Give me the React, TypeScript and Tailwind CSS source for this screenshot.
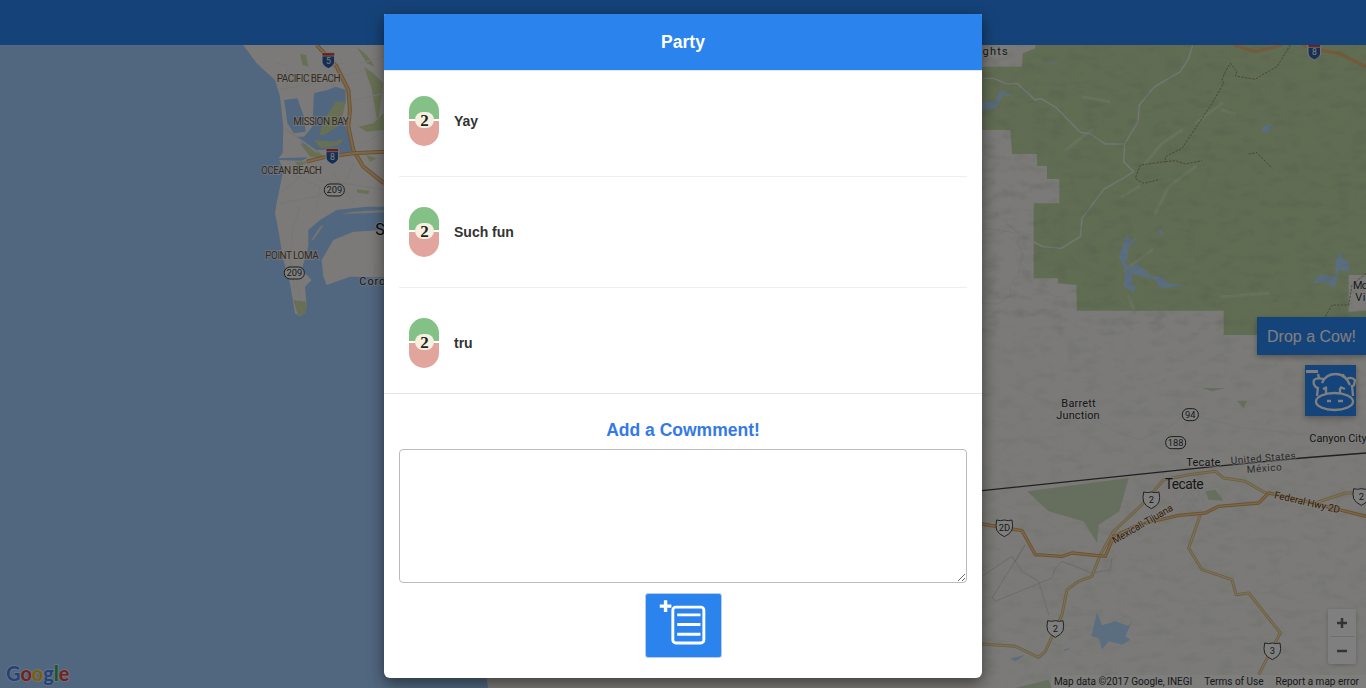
import React from "react";

type LabelProps = { x: number; y: number; w: number; s?: number; c?: string; r?: number; children: React.ReactNode };
const L = ({ x, y, w, s = 33, c = "#2f2f2f", r, children }: LabelProps) => (
  <text
    x={x}
    y={y}
    fontSize={s}
    textLength={w}
    lengthAdjust="spacing"
    fill={c}
    stroke="rgba(255,255,255,0.55)"
    strokeWidth={6}
    paintOrder="stroke"
    transform={r ? `rotate(${r} ${x} ${y})` : undefined}
  >
    {children}
  </text>
);

const Road = ({ d, w = 3.5, c = "#ececea" }: { d: string; w?: number; c?: string }) => (
  <path d={d} fill="none" stroke={c} strokeWidth={w} strokeLinejoin="round" strokeLinecap="round" />
);

const Hwy = ({ d, w = 9 }: { d: string; w?: number }) => (
  <g>
    <path d={d} fill="none" stroke="#d8a565" strokeWidth={w + 3} strokeLinejoin="round" />
    <path d={d} fill="none" stroke="#f8d295" strokeWidth={w - 3} strokeLinejoin="round" />
  </g>
);

const Yellow = ({ d }: { d: string }) => (
  <g>
    <path d={d} fill="none" stroke="#d6bd84" strokeWidth={9} strokeLinejoin="round" />
    <path d={d} fill="none" stroke="#f7e3ae" strokeWidth={4} strokeLinejoin="round" />
  </g>
);

const Interstate = ({ x, y, n }: { x: number; y: number; n: string }) => (
  <g transform={`translate(${x} ${y})`}>
    <path d="M-19 -22 H19 V2 C19 14 8 20 0 24 C-8 20 -19 14 -19 2 Z" fill="#2a5fa8" stroke="#fff" strokeWidth={3} />
    <path d="M-19 -24 H19 V-14 H-19 Z" fill="#c9413c" stroke="#fff" strokeWidth={2} />
    <text x={0} y={10} fontSize={26} fill="#fff" textAnchor="middle">{n}</text>
  </g>
);

const Oval = ({ x, y, n, w = 60 }: { x: number; y: number; n: string; w?: number }) => (
  <g>
    <rect x={x - w / 2} y={y - 18} width={w} height={36} rx={17} fill="#fff" stroke="#333" strokeWidth={3} />
    <text x={x} y={y + 10} fontSize={28} fill="#333" textAnchor="middle">{n}</text>
  </g>
);

const Shield = ({ x, y, n }: { x: number; y: number; n: string }) => (
  <g transform={`translate(${x} ${y})`}>
    <path d="M-23 -24 Q-12 -20 0 -24 Q12 -20 23 -24 Q27 -6 23 6 Q18 18 0 26 Q-18 18 -23 6 Q-27 -6 -23 -24 Z" fill="#fff" stroke="#444" strokeWidth={3} />
    <text x={0} y={10} fontSize={28} fill="#333" textAnchor="middle">{n}</text>
  </g>
);

const MapArt = () => (
  <svg className="absolute inset-0 w-full h-full" viewBox="0 45 1366 643" preserveAspectRatio="none">
    <defs>
      <filter id="terrain" x="0" y="0" width="100%" height="100%">
        <feTurbulence type="fractalNoise" baseFrequency="0.06 0.11" numOctaves={4} seed={11} />
        <feColorMatrix type="matrix" values="0 0 0 0 0.3  0 0 0 0 0.32  0 0 0 0 0.28  1.6 0 0 0 -0.72" />
      </filter>
    </defs>
    <rect x={0} y={45} width={1366} height={643} fill="#f6f5f0" />

    {/* coast side */}
    <g transform="translate(0 30) scale(0.33333)">
      <path
        d="M0 45 L730 45 770 100 825 150 840 200 850 290 848 370 835 385 850 420 840 470 830 520 825 550 835 600 850 690 870 760 885 850 900 860 920 830 915 770 935 750 905 720 925 650 925 600 960 570 1010 540 1100 530 1152 530 1152 600 1060 605 1000 630 965 690 970 740 980 765 1050 740 1152 742 1300 800 1464 1974 0 1974 Z"
        fill="#a3ccff"
      />
      <path d="M852 210 L892 205 912 260 917 305 882 310 862 280 857 240 Z M942 190 L982 180 1007 170 1037 180 1037 220 1020 240 1062 360 1030 380 982 360 922 360 892 320 912 320 937 290 Z M830 385 L925 382 905 392 835 390 Z" fill="#a3ccff" />
      <path d="M1007 215 L1037 215 1027 260 1012 290 972 315 957 315 977 260 Z M942 330 L1002 335 1032 325 1017 345 962 355 Z" fill="#cfe0a8" />
      <path d="M900 72 L918 75 925 110 908 105 Z M1070 50 L1100 75 1125 110 1100 100 Z M1092 110 L1120 130 1150 160 1137 260 1090 295 1130 265 1115 175 Z M1075 290 L1120 280 1150 250 1152 300 1100 305 Z M885 395 L925 395 895 410 Z M1070 478 L1108 482 1105 492 1072 488 Z M1098 375 L1130 385 1110 395 Z M880 810 L920 815 918 850 895 860 Z M900 340 L950 360 975 385 930 380 Z"
        fill="#cfe0a8"
      />
      <path d="M1152 541 L1152 547 1100 550 1022 552 1060 545 1105 542 Z M932 632 L960 590 972 584 942 628 Z" fill="#e9e8e3" />
      <Road d="M840 180 L1000 145 1100 120 M830 100 L860 105 860 180 M960 110 L1030 100 M1000 110 L1000 170 M850 420 L960 470 950 540 M935 410 L840 490 M840 520 L950 500 1010 455 M900 530 L880 590 870 690 885 780 M960 450 L1100 470 1152 480 M1060 400 L1040 450 M1000 430 L1060 520 M1080 100 L1152 80 M1060 210 L1152 190 M1090 340 L1152 305" />
      <Road d="M860 300 L950 365" w={6} />
      <Road d="M1130 700 L1120 745 M890 750 L900 810" />
      <Hwy d="M950 45 L1010 110 1045 180 1050 240 1045 290 1060 360 1090 410 1152 460" />
      <Hwy d="M920 395 L980 380 1060 370 1152 365" />
      <Interstate x={985} y={92} n="5" />
      <Interstate x={997} y={379} n="8" />
      <Oval x={1003} y={480} n="209" />
      <Oval x={883} y={729} n="209" />
      <L x={830} y={156} w={192} s={30} c="#6a5236">PACIFIC BEACH</L>
      <L x={880} y={286} w={166} s={30} c="#6a5236">MISSION BAY</L>
      <L x={783} y={433} w={183} s={30} c="#6a5236">OCEAN BEACH</L>
      <L x={796} y={688} w={160} s={30} c="#6a5236">POINT LOMA</L>
      <L x={1078} y={764} w={78} s={33}>Coro</L>
      <L x={1126} y={614} w={30} s={48} c="#111">S</L>

      <text fontSize={64} fontFamily="Lato" fontWeight={700} stroke="rgba(255,255,255,0.55)" strokeWidth={6} paintOrder="stroke" x={18} y={1954} textLength={190} lengthAdjust="spacingAndGlyphs">
        <tspan fill="#4285f4">G</tspan>
        <tspan fill="#ea4335">o</tspan>
        <tspan fill="#fbbc05">o</tspan>
        <tspan fill="#4285f4">g</tspan>
        <tspan fill="#34a853">l</tspan>
        <tspan fill="#ea4335">e</tspan>
      </text>
    </g>

    {/* north east */}
    <g transform="translate(982 30) scale(0.33333)">
      <path
        d="M-30 45 L160 45 160 55 122 70 120 110 -30 110 -30 300 85 300 90 372 165 372 165 408 195 408 195 447 232 447 232 520 155 520 155 745 228 745 228 760 283 765 285 842 725 842 725 915 1152 915 1152 45 Z"
        fill="#c2daa6"
      />
      <path d="M1100 735 L1152 735 1152 842 1100 845 Z" fill="#f6f5f0" />
      <path d="M520 550 L560 470 640 410 M600 300 L540 340 490 400 M720 220 L640 280 M430 720 L510 660 M760 250 L720 240 M420 500 L470 470 M300 200 L380 215 M250 360 L330 300 M440 800 L460 850 M720 800 L860 790" fill="none" stroke="#dcebc4" strokeWidth={9} strokeLinecap="round" opacity={0.6} />
      <path d="M435 612 L445 630 468 625 440 650 438 680 428 700 445 712 465 700 510 740 540 738 555 760 610 765 550 775 530 770 520 748 490 742 450 730 452 765 460 770 455 790 425 765 430 720 410 680 Z" fill="#b4dcff" />
      <path d="M1075 664 L1085 690 1100 695 1102 725 1070 720 1065 745 1058 772 1020 755 990 760 1015 733 1060 740 1062 690 Z" fill="#b4dcff" />
      <path d="M55 180 L95 200 60 195 45 235 0 240 -10 215 40 215 Z M188 95 L225 95 210 100 Z M838 300 L855 282 868 285 860 305 852 312 Z M528 598 L538 600 546 612 540 616 Z" fill="#b4dcff" />
      <path d="M755 45 L820 65 900 45 M960 45 L1010 60 1070 70 1152 110" fill="none" stroke="#e8b67a" strokeWidth={10} strokeLinejoin="round" />
      <Road w={4} d="M0 145 L35 145 75 162 105 160 160 210 175 205 222 232 295 307 325 312 370 342 428 342 425 395 455 425 435 438 365 478 300 565 295 620 238 655 182 650 115 615 60 600 0 595" />
      <Road w={4} d="M632 45 L620 85 595 125 515 172 472 225 468 275 428 342" />
      <Road w={4} d="M115 615 L105 640 122 670 108 735 82 770 85 795 50 822 0 820 M0 545 L40 548 110 612" />
      <path d="M925 45 L885 110 840 135 820 148 760 138 765 125 745 100 730 125 720 150 725 160 690 220 650 280 600 355 550 380 550 395 475 405 460 445 485 460 535 448 M550 395 L580 392 610 402 660 392 M800 372 L825 368 870 415 M1152 730 L1110 765 1100 825 1050 825 1030 860" fill="none" stroke="#8d7a5f" strokeWidth={2.5} strokeDasharray="7 4" />
      <Interstate x={997} y={66} n="8" />
      <L x={-10} y={76} w={87} s={33}>ights</L>
      <L x={1113} y={778} w={45} s={33}>Mo</L>
      <L x={1120} y={812} w={30} s={33}>Vi</L>
    </g>
    <rect x={982} y={45} width={384} height={290} filter="url(#terrain)" opacity={0.3} />
    <rect x={982} y={335} width={384} height={353} filter="url(#terrain)" opacity={0.18} />

    {/* south east */}
    <g transform="translate(982 388) scale(0.33333)">
      <path d="M135 310 L440 270 412 370 350 410 345 465 305 400 200 370 Z" fill="#cddcbc" />
      <path d="M100 900 L200 875 210 900 Z M660 0 L730 0 690 10 Z M765 38 L795 38 785 62 Z M670 310 L700 305 725 338 680 335 Z" fill="#cddcbc" />
      <path d="M345 672 L360 712 400 700 440 715 452 695 430 745 445 755 420 770 380 760 360 785 350 750 328 745 Z" fill="#b4dcff" />
      <path d="M85 812 L130 800 100 820 Z M245 785 L268 778 250 790 Z" fill="#b4dcff" />
      <Road d="M100 0 L200 40 330 90 410 135 475 155 565 115 605 80 M650 85 L780 120 980 140 1100 170 1152 165" />
      <Road d="M540 270 L620 250 710 250 M570 310 L590 345 620 310 650 340 M640 300 L670 350 605 415 M620 310 L720 295 M480 320 L540 350" />
      <Road d="M0 565 L90 505 120 550 170 580 200 680" c="#dcdcd8" />
      <path d="M30 630 L130 470 100 520 M30 630 L40 640 210 570 220 540 240 520 M240 520 L330 555 385 545 390 510" fill="none" stroke="#c9c9c5" strokeWidth={2} />
      <Yellow d="M0 768 L100 775 170 808 190 790 240 680 255 605 290 580 330 565 355 500 395 430 480 350 545 275 620 260 700 250 725 270 790 280 860 320 M1152 315 L1090 315 1000 345 M655 380 L620 480 660 545 750 575 762 620 800 615 895 735 830 860" />
      <Hwy d="M0 408 L120 428 160 500 240 505 270 495 370 505 395 445 470 410 590 382 670 375 710 355 830 345 860 315 950 335 1152 385" w={7} />
      <path d="M0 308 L440 262 700 235 960 210 1152 195" fill="none" stroke="#404040" strokeWidth={4} />
      <Shield x={67} y={420} n="2D" />
      <Shield x={508} y={336} n="2" />
      <Shield x={1138} y={326} n="2" />
      <Shield x={220} y={722} n="2" />
      <Shield x={871} y={789} n="3" />
      <Oval x={625} y={80} n="94" w={48} />
      <Oval x={581} y={164} n="188" w={60} />
      <L x={238} y={56} w={103} s={33}>Barrett</L>
      <L x={223} y={92} w={130} s={33}>Junction</L>
      <L x={982} y={161} w={172} s={33}>Canyon City</L>
      <L x={613} y={233} w={102} s={33}>Tecate</L>
      <L x={747} y={228} w={195} s={30} c="#555" r={-4.5}>United States</L>
      <L x={795} y={255} w={105} s={30} c="#555" r={-4.5}>México</L>
      <L x={548} y={302} w={117} s={42}>Tecate</L>
      <L x={875} y={330} w={202} s={30} c="#6b3e06" r={13}>Federal Hwy 2D</L>
      <L x={398} y={468} w={205} s={30} c="#6b3e06" r={-30}>Mexicali-Tijuana</L>
    </g>
  </svg>
);

const Row = ({ text }: { text: string }) => (
  <div className="mx-[15px] pl-[10px] py-[30px] first:pt-0 last:pb-0 border-b last:border-b-0 border-[#eeeeee] flex items-center gap-[15px]">
    <div className="relative w-[30px] h-[50px] flex flex-col gap-[2px] shrink-0">
      <div className="h-[23px] bg-[#83c187] rounded-t-[15px]" />
      <div className="h-[25px] bg-[#e2a59e] rounded-b-[15px]" />
      <div className="absolute left-[6px] top-[16px] w-[19px] h-[16px] rounded-full bg-[#f5f0df] flex items-center justify-center font-['Liberation_Serif',serif] font-bold text-[17px] leading-none text-[#222]">
        2
      </div>
    </div>
    <span className="text-[14px] font-bold text-[#333333]">{text}</span>
  </div>
);

const CowIcon = () => (
  <svg viewBox="0 0 51 51" className="w-full h-full" fill="none" stroke="#ffffff" strokeWidth={2.3}>
    <rect x={1} y={5} width={12} height={3} fill="#ffffff" stroke="none" />
    <path d="M17 18 C19 13 24 9 31 9 C38 9 42 13 45 20" />
    <path d="M13 23 C9 22 8 18 9 15 C11 13 15 13 19 14 M13 9 L14 13 M38 9 L39 13 M42 14 C45 12 48 13 50 15 L49 20 L46 22" />
    <path d="M13 22 L12 31 M47 20 L48 31" />
    <ellipse cx={29.5} cy={36.5} rx={18.5} ry={8.5} />
    <path d="M22 36 H26 M33 36 H38" />
    <path d="M18 24 L22 22 M21 23 V28 M35 23 V28 M35 22 L40 24" />
  </svg>
);

const AddIcon = () => (
  <svg viewBox="0 0 77 65" className="w-full h-full" fill="none" stroke="#ffffff">
    <rect x={27.5} y={13.5} width={32} height={37} rx={3} strokeWidth={3} />
    <path d="M32 21.5 H56 M32 31.5 H56 M32 41.5 H56" strokeWidth={3} />
    <path d="M14 12.5 H26 M20 6.5 V18.5" strokeWidth={3.5} />
  </svg>
);

export default function App() {
  return (
    <div className="relative w-full h-[688px] overflow-hidden flex flex-col font-['Liberation_Sans',Arial,sans-serif]">
      <div className="h-[45px] shrink-0 bg-[#2a86f2]" />
      <div className="relative flex-1 font-['Roboto',sans-serif]">
        <MapArt />
        <div className="absolute right-0 top-[272px] w-[109px] h-[38px] pt-px bg-[#2a88f5] text-white text-[16px] font-['Liberation_Sans',Arial,sans-serif] flex items-center justify-center shadow-[0_2px_6px_rgba(0,0,0,0.3)]">
          Drop a Cow!
        </div>
        <div className="absolute right-[10px] top-[320px] w-[51px] h-[51px] bg-[#2a88f5] shadow-[0_2px_6px_rgba(0,0,0,0.3)]">
          <CowIcon />
        </div>
        <div className="absolute right-[10px] top-[564px] w-[28px] h-[55px] bg-white rounded-[2px] flex flex-col items-center text-[#555] shadow-[0_1px_4px_rgba(0,0,0,0.2)]">
          <svg viewBox="0 0 28 27" className="w-[28px] h-[27px]" fill="none" stroke="#666" strokeWidth={2.5}>
            <path d="M9 14 H19 M14 9 V19" />
          </svg>
          <div className="w-[24px] h-px bg-[#ddd]" />
          <svg viewBox="0 0 28 27" className="w-[28px] h-[27px]" fill="none" stroke="#666" strokeWidth={2.5}>
            <path d="M9 14 H19" />
          </svg>
        </div>
        <div className="absolute right-0 bottom-0 h-[13px] w-[315px] pr-[7px] bg-white/70 flex items-center justify-end gap-[12px] text-[10px] leading-none text-[#333]">
          <span>Map data ©2017 Google, INEGI</span>
          <span>Terms of Use</span>
          <span>Report a map error</span>
        </div>
      </div>

      <div className="absolute inset-0 bg-black/50 flex justify-center pt-[14px]">
        <div className="w-[598px] h-[664px] bg-white rounded-b-[6px] rounded-t-[2px] overflow-hidden shadow-[0_5px_15px_rgba(0,0,0,0.5)] flex flex-col">
          <div className="h-[56px] shrink-0 pt-px box-border bg-[#2b83ee] flex items-center justify-center text-white text-[17.5px] font-bold">
            Party
          </div>
          <div className="h-px shrink-0 bg-[#e5e5e5]" />
          <div className="py-[25px] border-b border-[#e5e5e5] flex flex-col">
            <Row text="Yay" />
            <Row text="Such fun" />
            <Row text="tru" />
          </div>
          <div className="px-[15px] flex flex-col items-center">
            <h2 className="h-[55px] pt-[26px] text-[17.5px] leading-[20px] font-bold text-[#337ae8]">Add a Cowmment!</h2>
            <textarea className="block w-[568px] h-[134px] border border-[#bbbbbb] rounded-[4px] bg-white" />
            <button className="mt-[10px] w-[77px] h-[65px] bg-[#2b83ee] border border-[#b9cde6] rounded-[3px]">
              <AddIcon />
            </button>
          </div>
        </div>
      </div>
    </div>
  );
}
